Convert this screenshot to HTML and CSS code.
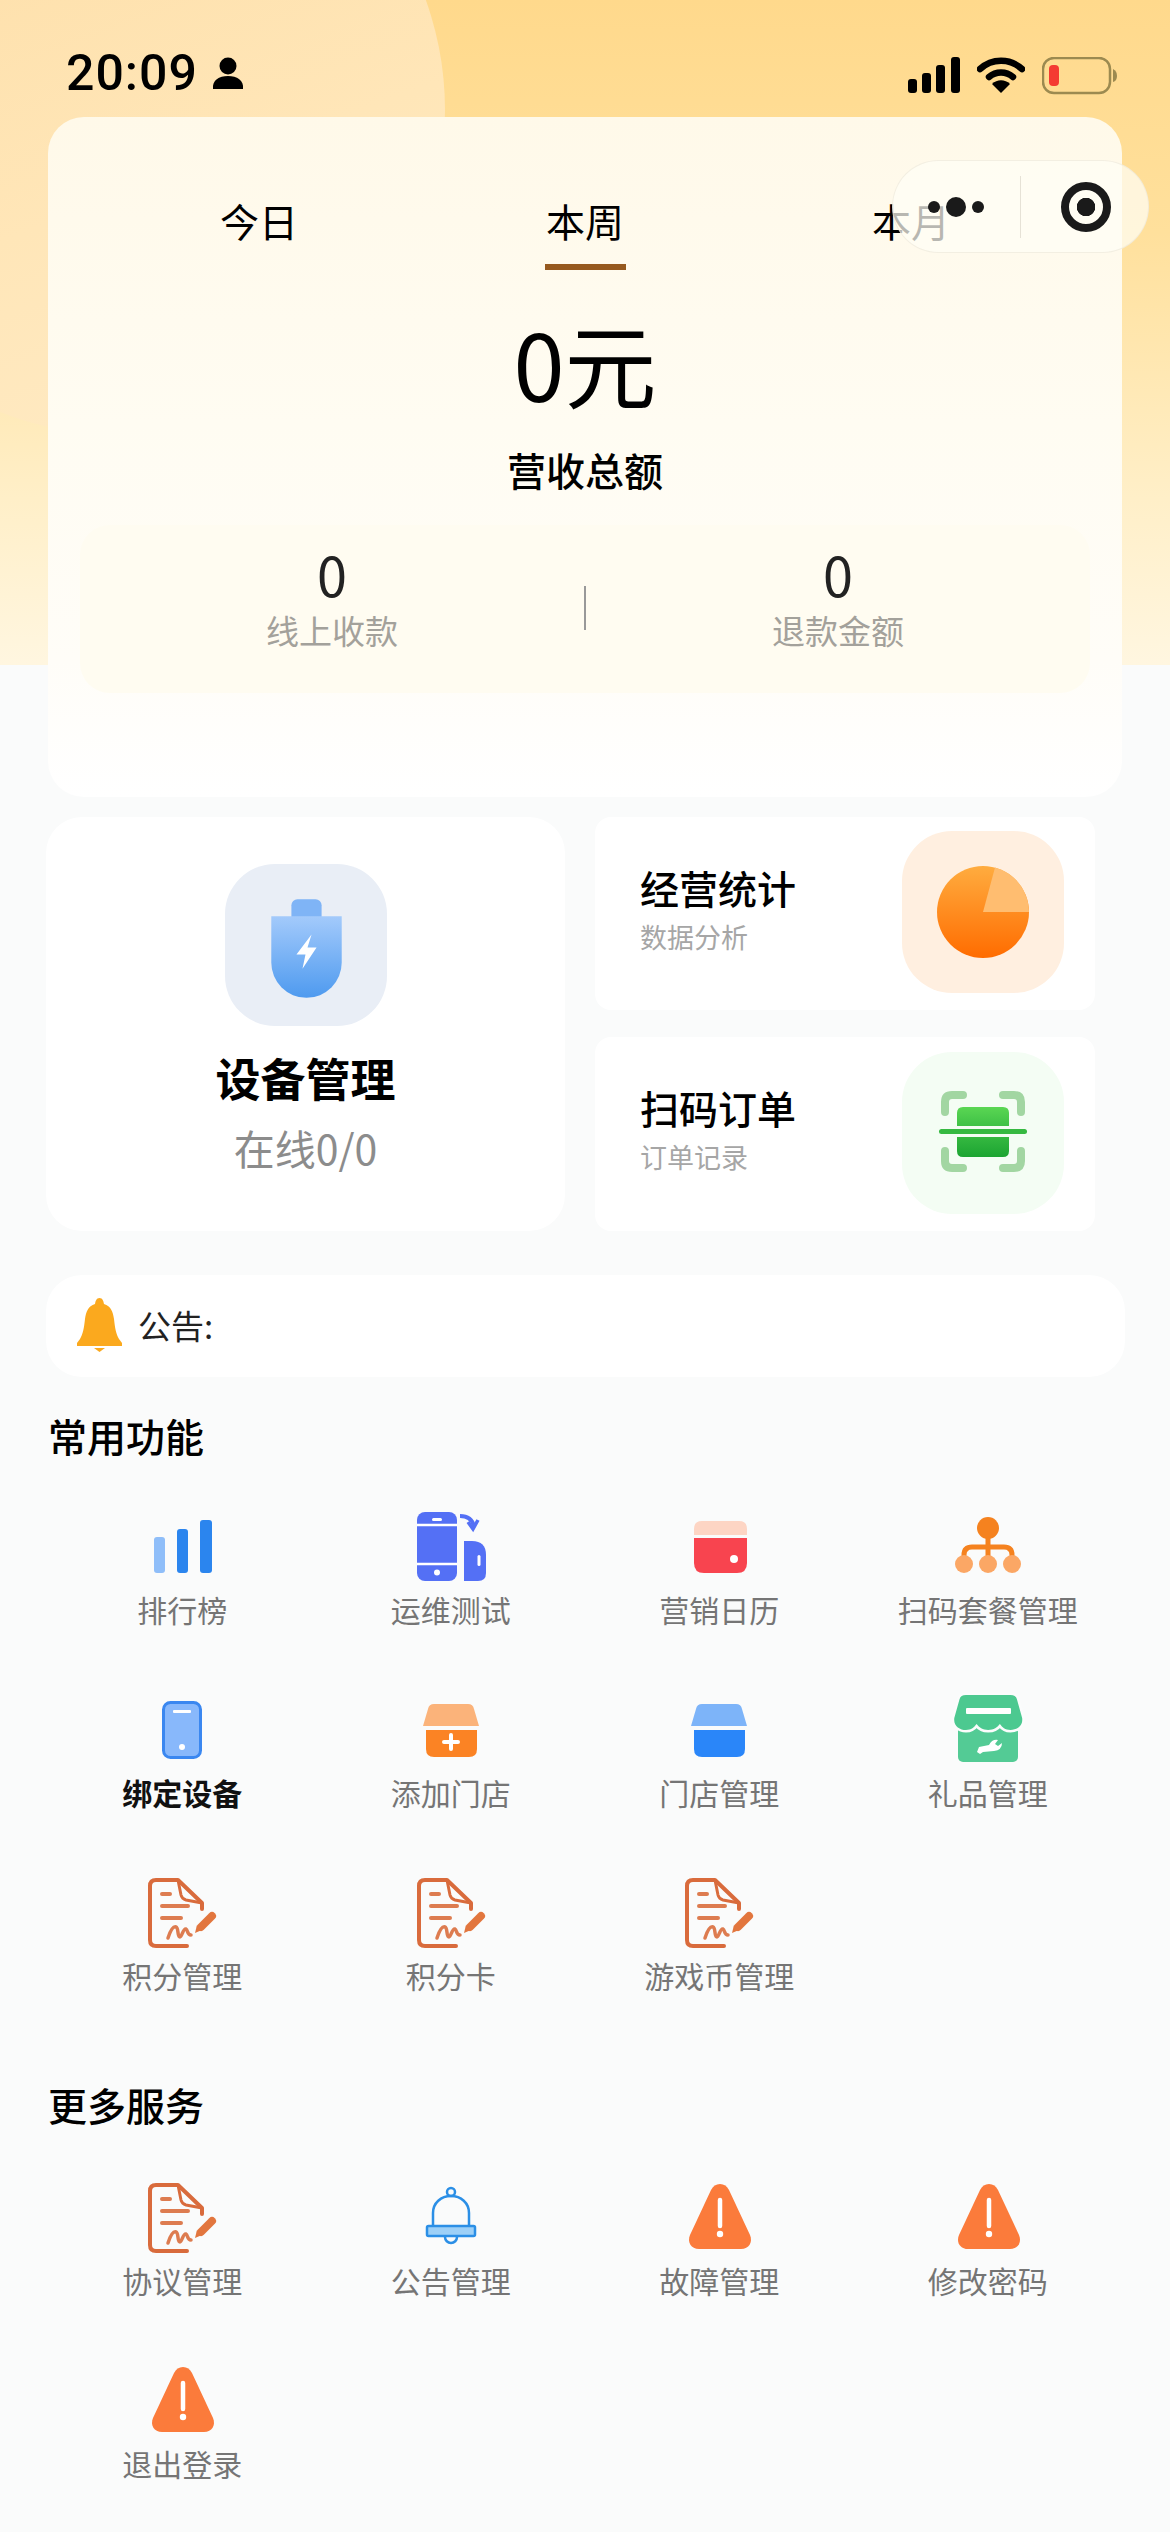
FILE: index.html
```html
<!DOCTYPE html>
<html lang="zh-CN">

<head>
  <meta charset="UTF-8">
  <meta name="viewport" content="width=device-width, initial-scale=1.0">
  <title>首页</title>
  <link rel="stylesheet" href="styles.css">
</head>

<body>
  <svg class="defs" width="0" height="0">
    <defs>
      <linearGradient id="shieldFill" x1="0" y1="0" x2="0" y2="1">
        <stop offset="0" stop-color="#a3cafb" />
        <stop offset="1" stop-color="#4e9aef" />
      </linearGradient>
      <linearGradient id="pieFill" x1="0" y1="0" x2="0" y2="1">
        <stop offset="0" stop-color="#ffac3f" />
        <stop offset="1" stop-color="#ff6c00" />
      </linearGradient>
      <linearGradient id="scanTop" x1="0" y1="0" x2="0" y2="1">
        <stop offset="0" stop-color="#5ad653" />
        <stop offset="1" stop-color="#3fc146" />
      </linearGradient>
      <linearGradient id="scanBottom" x1="0" y1="0" x2="0" y2="1">
        <stop offset="0" stop-color="#35b840" />
        <stop offset="1" stop-color="#1ca432" />
      </linearGradient>
      <symbol id="doc" viewBox="0 0 80 80">
        <path d="M45 74H14q-6 0-6-6V14q0-6 6-6h22l24 23v6" fill="none" stroke="#d96b3c" stroke-width="4" stroke-linecap="round" stroke-linejoin="round" />
        <path d="M36 8l3 15q1 4 5 5l16 3" fill="none" stroke="#d96b3c" stroke-width="3" stroke-linejoin="round" />
        <path d="M20 22h8M20 34h26M20 46h19" fill="none" stroke="#dd7c50" stroke-width="4" stroke-linecap="round" />
        <path d="M26 66c2-6 5-12 8-11 3 1 1 10 4 10 2 0 3-9 6-8 2 1 1 6 5 6" fill="none" stroke="#dd7c50" stroke-width="3.500" stroke-linecap="round" />
        <path d="M70 44L59 55" fill="none" stroke="#e2763e" stroke-width="8" stroke-linecap="round" />
        <path d="M55 53l5 5-7 3z" fill="#e2763e" />
      </symbol>
      <symbol id="warn" viewBox="0 0 80 80">
        <path d="M41 7c4 0 7 2 9 6l21 45c3 7-1 14-9 14H20c-8 0-12-7-9-14l21-45c2-4 5-6 9-6z" fill="#fb7b3b" />
        <path d="M41 23v26" stroke="#fff" stroke-width="4.500" stroke-linecap="round" />
        <circle cx="41" cy="57" r="3.200" fill="#fff" />
      </symbol>
      <symbol id="store" viewBox="0 0 80 80">
        <path d="M23 15h34q5 0 6 5l5 17H12l5-17q1-5 6-5z" fill="currentColor" opacity="0.6" />
        <path d="M15 41h51v19q0 8-8 8H23q-8 0-8-8z" fill="currentColor" />
      </symbol>
    </defs>
  </svg>

  <div class="page">
    <div class="backdrop">
      <div class="blob"></div>
    </div>

    <div class="status">
      <div class="status-left">
        <span class="time">20:09</span>
        <svg width="32" height="32" viewBox="0 0 32 32">
          <circle cx="16" cy="9" r="8.500" fill="#000" />
          <path d="M1 32c-1-9 6-13 15-13s16 4 15 13z" fill="#000" />
        </svg>
      </div>
      <div class="status-right">
        <svg width="52" height="36" viewBox="0 0 52 36">
          <rect x="0" y="22" width="9" height="14" rx="3" />
          <rect x="14" y="16" width="9" height="20" rx="3" />
          <rect x="28" y="8" width="9" height="28" rx="3" />
          <rect x="43" y="0" width="9" height="36" rx="3" />
        </svg>
        <svg width="48" height="36" viewBox="0 0 48 36">
          <path d="M3 12C15 1 33 1 45 12" fill="none" stroke="#000" stroke-width="6.500" stroke-linecap="round" />
          <path d="M12 20c7-6 17-6 24 0" fill="none" stroke="#000" stroke-width="6.500" stroke-linecap="round" />
          <path d="M15 27c5-5 13-5 18 0L24 36z" fill="#000" />
        </svg>
        <svg width="76" height="38" viewBox="0 0 76 38">
          <rect x="1" y="1" width="67" height="35" rx="11" fill="none" stroke="#9c8a50" stroke-width="2.500" />
          <rect x="7" y="8" width="10" height="21" rx="4" fill="#f43a32" />
          <path d="M71 12q4 2 4 7t-4 6z" fill="#9c8a50" />
        </svg>
      </div>
    </div>

    <section class="summary">
      <div class="tabs">
        <div class="tab">今日</div>
        <div class="tab tab-active">本周</div>
        <div class="tab">本月</div>
      </div>
      <div class="amount">0元</div>
      <div class="amount-label">营收总额</div>
      <div class="stats">
        <div class="stat">
          <div class="stat-value">0</div>
          <div class="stat-label">线上收款</div>
        </div>
        <div class="stat-line"></div>
        <div class="stat">
          <div class="stat-value">0</div>
          <div class="stat-label">退款金额</div>
        </div>
      </div>
    </section>

    <div class="capsule">
      <div class="capsule-dots">
        <i class="dot"></i>
        <i class="dot dot-big"></i>
        <i class="dot"></i>
      </div>
      <div class="capsule-line"></div>
      <div class="capsule-target"></div>
    </div>

    <section class="cards">
      <div class="card card-device">
        <div class="icon-box icon-blue">
          <svg width="162" height="162" viewBox="0 0 161 161">
            <rect x="66" y="35" width="30" height="24" rx="6" fill="#7fb4f6" />
            <path d="M46 52h70v46a35 35 0 0 1-70 0z" fill="url(#shieldFill)" />
            <path d="M86 70L71 90h9l-3 14 14-21h-9z" fill="#fff" />
          </svg>
        </div>
        <div class="device-title">设备管理</div>
        <div class="device-sub">在线0/0</div>
      </div>
      <div class="card card-small">
        <div>
          <div class="small-title">经营统计</div>
          <div class="small-sub">数据分析</div>
        </div>
        <div class="icon-box icon-orange">
          <svg width="162" height="162" viewBox="0 0 162 162">
            <circle cx="81" cy="81" r="46" fill="url(#pieFill)" />
            <path d="M81 81L93 36.600A46 46 0 0 1 127 81z" fill="#ffbd70" />
          </svg>
        </div>
      </div>
      <div class="card card-small">
        <div>
          <div class="small-title">扫码订单</div>
          <div class="small-sub">订单记录</div>
        </div>
        <div class="icon-box icon-green">
          <svg width="162" height="162" viewBox="0 0 162 162">
            <path d="M43 60V50q0-7 7-7h11M119 60V50q0-7-7-7h-11M43 99v10q0 7 7 7h11M119 99v10q0 7-7 7h-11" fill="none" stroke="#a2d6a2" stroke-width="8" stroke-linecap="round" />
            <path d="M55 74V61q0-6 6-6h40q6 0 6 6v13z" fill="url(#scanTop)" />
            <path d="M55 85h52v14q0 6-6 6H61q-6 0-6-6z" fill="url(#scanBottom)" />
            <rect x="37" y="77" width="88" height="5" rx="2.500" fill="#36b941" />
          </svg>
        </div>
      </div>
    </section>

    <div class="notice">
      <svg width="45" height="54" viewBox="0 0 45 54">
        <path d="M22.500 0c3 0 4 3 4.500 6 7 2 9 8 10 15 1 9 2 15 5 20l3 4v3H0v-3l3-4c3-5 4-11 5-20 1-7 3-13 10-15 .5-3 1.500-6 4.500-6z" fill="#fba91e" />
        <path d="M17 50h11l-5.500 4z" fill="#fba91e" />
      </svg>
      <span class="notice-text">公告:</span>
    </div>

    <h2 class="section-title section-first">常用功能</h2>
    <div class="grid">
      <div class="item">
        <svg class="item-icon" viewBox="0 0 80 80">
          <rect x="12" y="31" width="11" height="36" rx="3" fill="#8fbef9" />
          <rect x="35" y="23" width="11" height="44" rx="3" fill="#2b85ee" />
          <rect x="58" y="14" width="12" height="53" rx="3" fill="#2b85ee" />
        </svg>
        <span class="item-name">排行榜</span>
      </div>
      <div class="item">
        <svg class="item-icon" viewBox="0 0 80 80">
          <rect x="6" y="6" width="40" height="69" rx="8" fill="#5470f5" />
          <path d="M6 19h40M6 58h40" stroke="#fff" stroke-width="2.500" />
          <rect x="21" y="12" width="10" height="3" rx="1.500" fill="#fff" />
          <circle cx="26" cy="66.500" r="3" fill="#fff" />
          <path d="M53 35h8q14 0 14 14v18q0 8-8 8H53z" fill="#5470f5" />
          <rect x="66.500" y="49" width="3" height="11" rx="1.500" fill="#fff" />
          <path d="M49 10q12 0 14 11" fill="none" stroke="#5470f5" stroke-width="4" />
          <path d="M57 16l5 7 5-9" fill="none" stroke="#5470f5" stroke-width="3.500" />
        </svg>
        <span class="item-name">运维测试</span>
      </div>
      <div class="item">
        <svg class="item-icon" viewBox="0 0 80 80">
          <path d="M15 29V23q0-8 8-8h37q8 0 8 8v6z" fill="#fdd5c4" />
          <path d="M15 32h53v25q0 10-10 10H25q-10 0-10-10z" fill="#f8444f" />
          <circle cx="55" cy="53" r="4" fill="#fff" />
        </svg>
        <span class="item-name">营销日历</span>
      </div>
      <div class="item">
        <svg class="item-icon" viewBox="0 0 80 80">
          <path d="M40 23v28M16 54v-5q0-8 8-8h32q8 0 8 8v5" fill="none" stroke="#f5821f" stroke-width="5" />
          <circle cx="40" cy="22" r="11" fill="#f5821f" />
          <circle cx="16" cy="58" r="9" fill="#fba765" />
          <circle cx="40" cy="58" r="9" fill="#fba765" />
          <circle cx="64" cy="58" r="9" fill="#fba765" />
        </svg>
        <span class="item-name">扫码套餐管理</span>
      </div>

      <div class="item">
        <svg class="item-icon" viewBox="0 0 80 80">
          <rect x="21.500" y="13.500" width="37" height="55" rx="7" fill="#88b8fb" stroke="#3a87f0" stroke-width="3" />
          <rect x="31" y="21" width="18" height="3" rx="1" fill="#fff" />
          <circle cx="40" cy="58" r="3" fill="#fff" />
        </svg>
        <span class="item-name item-strong">绑定设备</span>
      </div>
      <div class="item">
        <svg class="item-icon icon-store-orange" viewBox="0 0 80 80">
          <use href="#store" />
          <path d="M40 46v14M33 53h14" stroke="#fff" stroke-width="4" stroke-linecap="round" />
        </svg>
        <span class="item-name">添加门店</span>
      </div>
      <div class="item">
        <svg class="item-icon icon-store-blue" viewBox="0 0 80 80">
          <use href="#store" />
        </svg>
        <span class="item-name">门店管理</span>
      </div>
      <div class="item">
        <svg class="item-icon" viewBox="0 0 80 80">
          <rect x="10" y="36" width="60" height="37" rx="5" fill="#53cb95" />
          <path d="M16 6H58q5 0 6 4l5 19c1 8-5 12-11 12-5 0-8-3-10-6-2 3-6 6-11 6s-9-3-11-6c-2 3-5 6-10 6-6 0-12-4-11-12l5-19q1-4 6-4z" transform="translate(1 0) scale(1.060 1)" fill="#4cc990" stroke="#fbfcfc" stroke-width="5" paint-order="stroke" />
          <rect x="18" y="19" width="45" height="6" rx="1" fill="#fff" />
          <path d="M29 63l2-5 10-2q3-6 9-5l-3 4 3 2 4-3q0 7-8 8l-11 1-3 2z" fill="#fff" />
        </svg>
        <span class="item-name">礼品管理</span>
      </div>

      <div class="item">
        <svg class="item-icon"><use href="#doc" /></svg>
        <span class="item-name">积分管理</span>
      </div>
      <div class="item">
        <svg class="item-icon"><use href="#doc" /></svg>
        <span class="item-name">积分卡</span>
      </div>
      <div class="item">
        <svg class="item-icon"><use href="#doc" /></svg>
        <span class="item-name">游戏币管理</span>
      </div>
    </div>

    <h2 class="section-title section-second">更多服务</h2>
    <div class="grid">
      <div class="item">
        <svg class="item-icon"><use href="#doc" /></svg>
        <span class="item-name">协议管理</span>
      </div>
      <div class="item">
        <svg class="item-icon" viewBox="0 0 80 80">
          <circle cx="40" cy="15" r="4" fill="none" stroke="#2b8fe6" stroke-width="2.500" />
          <path d="M22 49V36c0-10 8-17 18-17s18 7 18 17v13" fill="none" stroke="#2b8fe6" stroke-width="2.500" />
          <rect x="16" y="49" width="48" height="10" rx="1.500" fill="#9dd0f7" stroke="#2b8fe6" stroke-width="2.500" />
          <path d="M34 60a6 6 0 0 0 12 0" fill="none" stroke="#2b8fe6" stroke-width="2.500" />
        </svg>
        <span class="item-name">公告管理</span>
      </div>
      <div class="item">
        <svg class="item-icon"><use href="#warn" /></svg>
        <span class="item-name">故障管理</span>
      </div>
      <div class="item">
        <svg class="item-icon"><use href="#warn" /></svg>
        <span class="item-name">修改密码</span>
      </div>
      <div class="item">
        <svg class="item-icon"><use href="#warn" /></svg>
        <span class="item-name">退出登录</span>
      </div>
    </div>
  </div>
</body>

</html>
```

FILE: styles.css
```css
* {
  margin: 0;
  padding: 0;
  box-sizing: border-box;
}

body {
  background: #fafbfb;
  font-family: "Noto Sans CJK SC", "Liberation Sans", sans-serif;
  color: #000;
}

.defs {
  position: absolute;
}

.page {
  position: relative;
  width: 1170px;
  height: 2532px;
  overflow: hidden;
}

.backdrop {
  position: absolute;
  top: 0;
  left: 0;
  width: 100%;
  height: 665px;
  overflow: hidden;
  background: linear-gradient(180deg, #ffd98c 0%, #ffe09c 35%, #ffefc8 75%, #fff6e0 100%);
}

.blob {
  position: absolute;
  top: -215px;
  left: -205px;
  width: 650px;
  height: 650px;
  border-radius: 50%;
  background: linear-gradient(160deg, #fddca2 0%, #ffe6b8 60%, #ffebc6 100%);
}

/* status bar */
.status {
  position: relative;
  height: 117px;
  padding: 54px 52px 0 66px;
  display: flex;
  justify-content: space-between;
  align-items: flex-start;
}

.status-left {
  display: flex;
  align-items: center;
  gap: 14px;
  height: 38px;
}

.time {
  font-family: "Roboto", "Liberation Sans", sans-serif;
  font-size: 50px;
  font-weight: 500;
  letter-spacing: 1px;
  line-height: 38px;
}

.status-right {
  display: flex;
  gap: 17px;
  margin-top: 3px;
}

/* top card */
.summary {
  position: relative;
  width: 1074px;
  height: 680px;
  margin-left: 48px;
  padding-top: 83px;
  border-radius: 36px;
  background: linear-gradient(180deg, #fff9e9 0%, #fffcf2 45%, #fffdf8 80%, #fff 100%);
}

.tabs {
  display: grid;
  grid-template-columns: repeat(3, 326px);
  justify-content: center;
}

.tab {
  position: relative;
  font-size: 39px;
  line-height: 40px;
  text-align: center;
}

.tab-active::after {
  content: "";
  position: absolute;
  left: 123px;
  bottom: -30px;
  width: 81px;
  height: 6px;
  background: #96591f;
}

.amount {
  margin-top: 72px;
  font-size: 92px;
  line-height: 100px;
  text-align: center;
}

.amount-label {
  margin-top: 32px;
  font-size: 39px;
  font-weight: 500;
  line-height: 50px;
  text-align: center;
}

.stats {
  display: flex;
  height: 168px;
  margin: 31px 32px 0;
  padding-top: 27px;
  border-radius: 30px;
  background: #fffcf1;
}

.stat {
  flex: 1;
  text-align: center;
}

.stat-value {
  font-size: 54px;
  line-height: 44px;
  color: #222;
}

.stat-label {
  margin-top: 12px;
  font-size: 33px;
  line-height: 44px;
  color: #a3a19b;
}

.stat-line {
  width: 2px;
  height: 44px;
  margin-top: 34px;
  background: #999;
}

/* wechat capsule */
.capsule {
  position: absolute;
  top: 160px;
  left: 892px;
  width: 257px;
  height: 93px;
  border: 1px solid rgba(235, 230, 215, 0.6);
  border-radius: 47px;
  background: rgba(255, 253, 245, 0.72);
  display: flex;
  align-items: center;
}

.capsule-dots {
  display: flex;
  align-items: center;
  gap: 6px;
  margin-left: 35px;
}

.dot {
  width: 12px;
  height: 12px;
  border-radius: 50%;
  background: #1a1a1a;
}

.dot-big {
  width: 20px;
  height: 20px;
}

.capsule-line {
  width: 1px;
  height: 62px;
  margin-left: 36px;
  background: #e6e2d6;
}

.capsule-target {
  width: 50px;
  height: 50px;
  margin-left: 40px;
  border: 8px solid #1a1a1a;
  border-radius: 50%;
  background: radial-gradient(circle, #1a1a1a 0, #1a1a1a 9px, transparent 9.500px);
}

/* middle cards */
.cards {
  display: grid;
  grid-template-columns: 519px 500px;
  grid-template-rows: 193px 194px;
  column-gap: 30px;
  row-gap: 27px;
  position: relative;
  margin: 20px 0 0 46px;
}

.card {
  background: #fff;
  border-radius: 16px;
}

.card-device {
  grid-row: 1 / 3;
  display: flex;
  flex-direction: column;
  align-items: center;
  padding-top: 47px;
  border-radius: 36px;
}

.card-small {
  display: flex;
  justify-content: space-between;
  align-items: center;
  padding: 0 31px 0 45px;
}

.card-small > div:first-child {
  margin-bottom: 9px;
}

.icon-box {
  width: 162px;
  height: 162px;
  border-radius: 50px;
}

.card-small .icon-box {
  margin-bottom: 3px;
}

.icon-box svg {
  display: block;
}

.icon-blue {
  background: #e9eef6;
}

.icon-orange {
  background: #ffefe0;
}

.icon-green {
  background: #f4fdf4;
}

.device-title {
  margin-top: 22px;
  font-size: 45px;
  font-weight: 700;
  line-height: 60px;
}

.device-sub {
  margin-top: 14px;
  font-size: 41px;
  line-height: 50px;
  color: #8c8c8c;
}

.small-title {
  font-size: 39px;
  font-weight: 500;
  line-height: 50px;
}

.small-sub {
  margin-top: 5px;
  font-size: 27px;
  line-height: 40px;
  color: #a6a6a6;
}

/* notice */
.notice {
  position: relative;
  display: flex;
  align-items: center;
  gap: 16px;
  width: 1079px;
  height: 102px;
  margin: 44px 0 0 46px;
  padding: 0 0 2px 31px;
  border-radius: 36px;
  background: #fff;
}

.notice-text {
  font-size: 33px;
  color: #222;
}

/* function grids */
.section-title {
  margin-left: 48px;
  font-size: 39px;
  font-weight: 500;
  line-height: 50px;
}

.section-first {
  margin-top: 33px;
  margin-bottom: 46px;
}

.section-second {
  margin-top: 84px;
  margin-bottom: 48px;
}

.grid {
  display: grid;
  grid-template-columns: repeat(4, 268.500px);
  row-gap: 60px;
  margin-left: 48px;
}

.item {
  display: flex;
  flex-direction: column;
  align-items: center;
}

.item-icon {
  display: block;
  width: 80px;
  height: 80px;
}

.item-name {
  margin-top: 3px;
  font-size: 30px;
  line-height: 40px;
  color: #757575;
}

.item-strong {
  font-weight: 700;
  color: #111;
}

.icon-store-orange {
  color: #fb8324;
}

.icon-store-blue {
  color: #2a86f9;
}
```
